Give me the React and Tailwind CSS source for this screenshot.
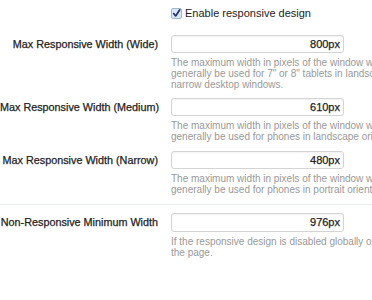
export default function App() {
  const rows = [
    {
      label: "Max Responsive Width (Wide)",
      value: "800px",
      desc: [
        "The maximum width in pixels of the window when the \u201cwide\u201d responsive design will be used. This will",
        "generally be used for 7\" or 8\" tablets in landscape orientation or for",
        "narrow desktop windows.",
      ],
    },
    {
      label: "Max Responsive Width (Medium)",
      value: "610px",
      desc: [
        "The maximum width in pixels of the window when the \u201cmedium\u201d responsive design will be used. This will",
        "generally be used for phones in landscape orientation.",
      ],
    },
    {
      label: "Max Responsive Width (Narrow)",
      value: "480px",
      desc: [
        "The maximum width in pixels of the window when the \u201cnarrow\u201d responsive design will be used. This will",
        "generally be used for phones in portrait orientation.",
      ],
    },
  ];

  const Row = ({ r, mt }) => (
    <div className={`flex ${mt}`}>
      <div className="w-[158px] shrink-0 whitespace-nowrap text-right text-[10.8px] leading-[18px] text-[#222] [-webkit-text-stroke:0.25px_#222]">
        {r.label}
      </div>
      <div className="ml-[13px] shrink-0">
        <div className="w-[173px] h-[18px] rounded-[3px] border border-[#d4d4d4] bg-white shadow-[inset_0_1px_2px_rgba(0,0,0,0.06)] text-right pr-[3px] text-[11px] leading-[16px] text-[#222] [-webkit-text-stroke:0.25px_#222]">
          {r.value}
        </div>
        <div className="mt-[4px] text-[10px] leading-[11px] text-[#999]">
          {r.desc.map((d, i) => (
            <div key={i} className="whitespace-nowrap">{d}</div>
          ))}
        </div>
      </div>
    </div>
  );

  return (
    <div className="w-[372px] h-[300px] overflow-hidden bg-white font-['Liberation_Sans',sans-serif]">
      <div className="flex pt-[6px]">
        <div className="w-[171px] shrink-0" />
        <div className="flex items-center">
          <span className="w-[11px] h-[11px] rounded-[2px] bg-[#d9e6f5] border border-[#9fb6d0] flex items-center justify-center">
            <svg width="11" height="11" viewBox="0 0 11 11">
              <path d="M2 5.5 L4.5 8.5 L9.5 1" stroke="#1c2f66" strokeWidth="2" fill="none" strokeLinecap="round" strokeLinejoin="round" />
            </svg>
          </span>
          <span className="ml-[3px] text-[11px] leading-[14px] text-[#222]">Enable responsive design</span>
        </div>
      </div>
      <Row r={rows[0]} mt="mt-[15px]" />
      <Row r={rows[1]} mt="mt-[8px]" />
      <Row r={rows[2]} mt="mt-[9px]" />
      <div className="h-px bg-[#e6ecf1] mt-[9px]" />
      <div className="flex mt-[8px]">
        <div className="w-[158px] shrink-0 whitespace-nowrap text-right text-[10.8px] leading-[19px] text-[#222] [-webkit-text-stroke:0.25px_#222]">
          Non-Responsive Minimum Width
        </div>
        <div className="ml-[13px] shrink-0">
          <div className="w-[173px] h-[19px] rounded-[3px] border border-[#d4d4d4] bg-white shadow-[inset_0_1px_2px_rgba(0,0,0,0.06)] text-right pr-[3px] text-[11px] leading-[17px] text-[#222] [-webkit-text-stroke:0.25px_#222]">
            976px
          </div>
          <div className="mt-[4px] text-[10px] leading-[11px] text-[#999]">
            <div className="whitespace-nowrap">If the responsive design is disabled globally or for a specific style, this will be the minimum width of</div>
            <div className="whitespace-nowrap">the page.</div>
          </div>
        </div>
      </div>
    </div>
  );
}
